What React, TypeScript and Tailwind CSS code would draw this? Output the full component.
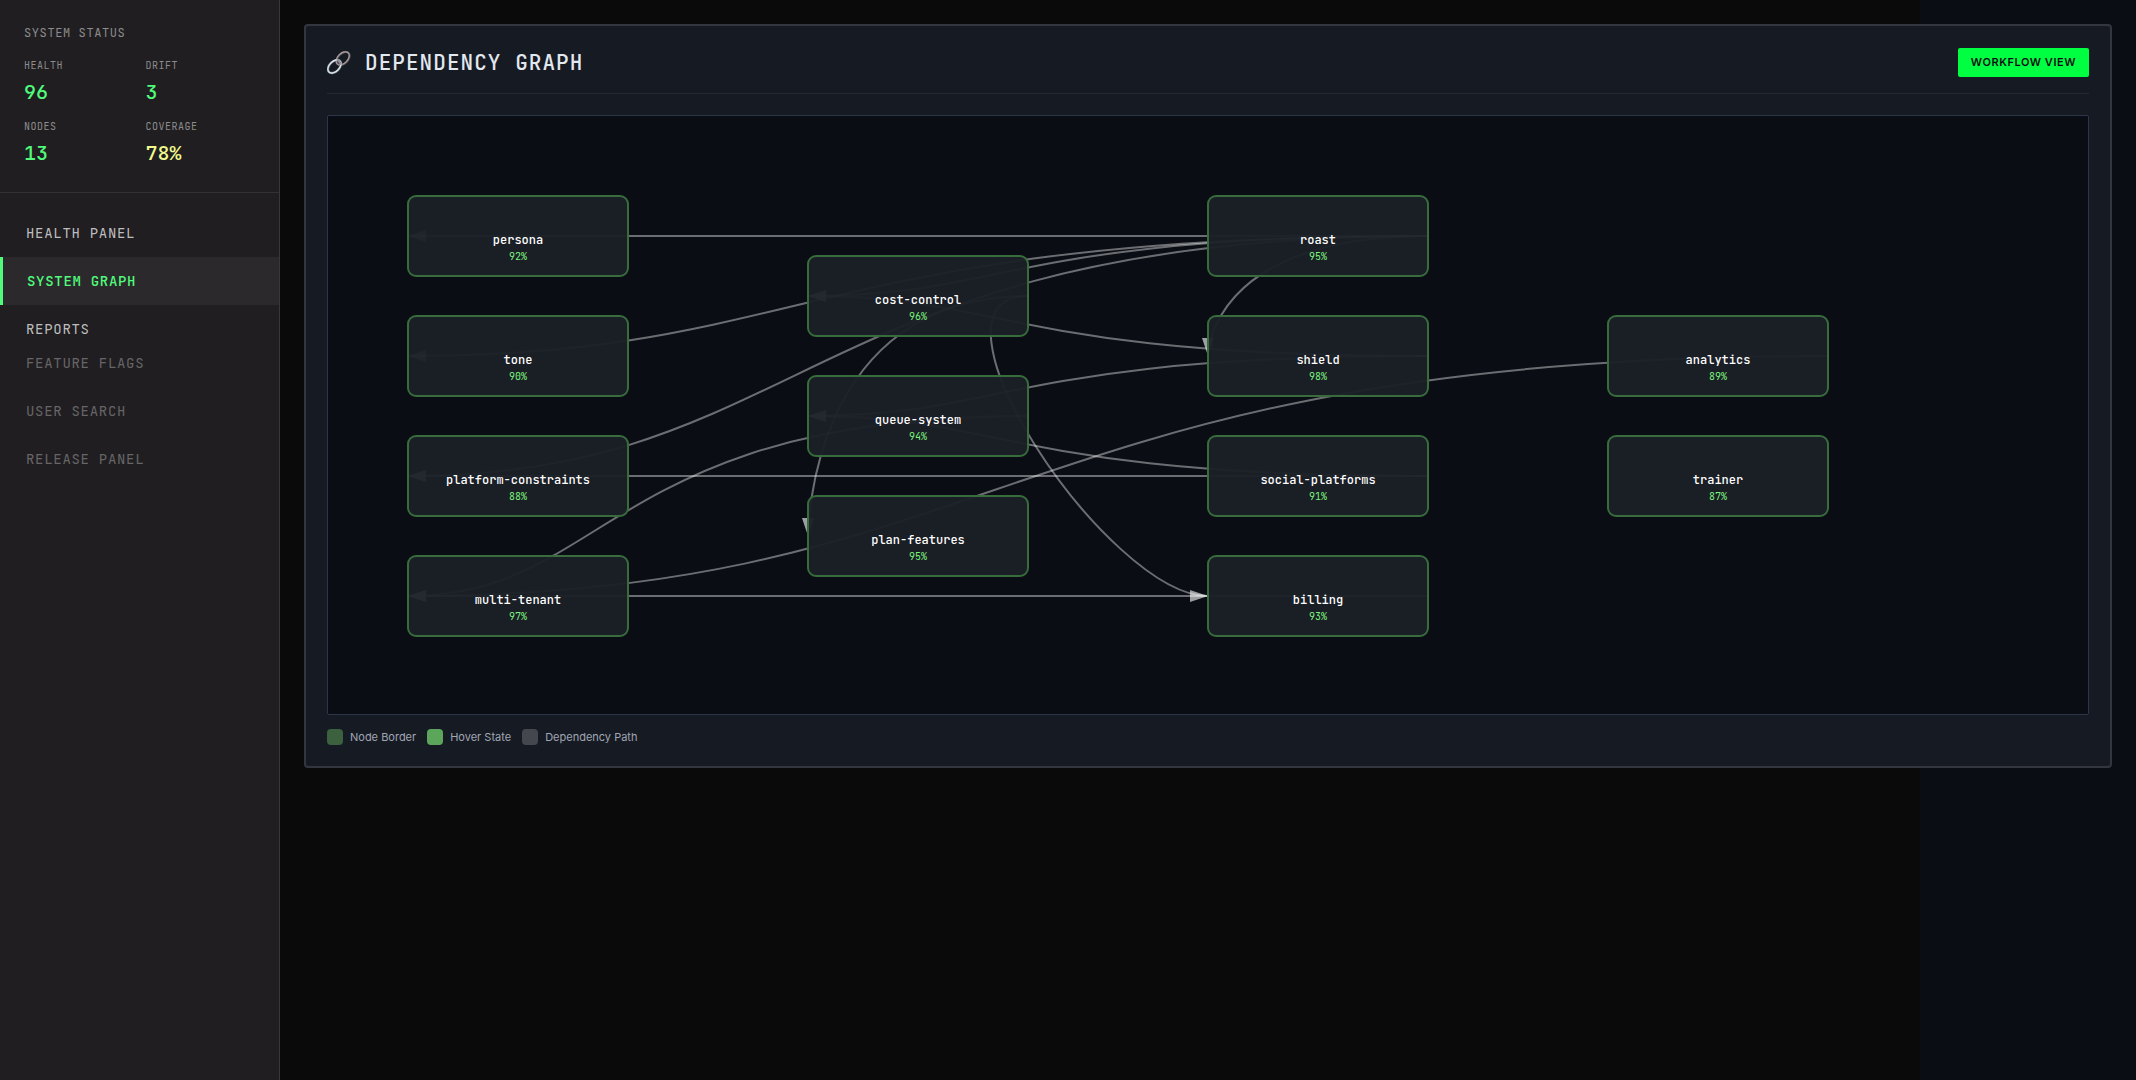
type NodeItem = { id: string; x: number; y: number; coverage: number };

const NODES: NodeItem[] = [
  { id: "persona", x: 80, y: 80, coverage: 92 },
  { id: "tone", x: 80, y: 200, coverage: 90 },
  { id: "platform-constraints", x: 80, y: 320, coverage: 88 },
  { id: "multi-tenant", x: 80, y: 440, coverage: 97 },
  { id: "cost-control", x: 480, y: 140, coverage: 96 },
  { id: "queue-system", x: 480, y: 260, coverage: 94 },
  { id: "plan-features", x: 480, y: 380, coverage: 95 },
  { id: "roast", x: 880, y: 80, coverage: 95 },
  { id: "shield", x: 880, y: 200, coverage: 98 },
  { id: "social-platforms", x: 880, y: 320, coverage: 91 },
  { id: "billing", x: 880, y: 440, coverage: 93 },
  { id: "analytics", x: 1280, y: 200, coverage: 89 },
  { id: "trainer", x: 1280, y: 320, coverage: 87 },
];

const EDGES: [string, string][] = [
  ["roast", "persona"],
  ["roast", "tone"],
  ["roast", "platform-constraints"],
  ["roast", "shield"],
  ["roast", "cost-control"],
  ["shield", "cost-control"],
  ["shield", "queue-system"],
  ["social-platforms", "queue-system"],
  ["social-platforms", "platform-constraints"],
  ["queue-system", "multi-tenant"],
  ["cost-control", "plan-features"],
  ["cost-control", "billing"],
  ["billing", "multi-tenant"],
  ["analytics", "multi-tenant"],
];

const NODE_WIDTH = 220;
const NODE_HEIGHT = 80;

function edgePath(fromId: string, toId: string) {
  const from = NODES.find((n) => n.id === fromId)!;
  const to = NODES.find((n) => n.id === toId)!;
  const dx = to.x - from.x;
  const bend = dx > 0 ? dx / 4 : dx / 2;
  const y1 = from.y + NODE_HEIGHT / 2;
  const y2 = to.y + NODE_HEIGHT / 2;
  return `M ${from.x + NODE_WIDTH} ${y1} C ${from.x + bend} ${y1}, ${to.x - bend} ${y2}, ${to.x} ${y2}`;
}

const STATS = [
  { label: "Health", value: "96", tone: "text-[#50fa7b]" },
  { label: "Drift", value: "3", tone: "text-[#50fa7b]" },
  { label: "Nodes", value: "13", tone: "text-[#50fa7b]" },
  { label: "Coverage", value: "78%", tone: "text-[#f1fa8c]" },
];

const LEGEND = [
  { label: "Node Border", swatch: "bg-[#3b613e]" },
  { label: "Hover State", swatch: "bg-[#5ca65c]" },
  { label: "Dependency Path", swatch: "bg-[#45474f]" },
];

function LinkIcon() {
  return (
    <svg width="24" height="24" viewBox="0 1 24 24" fill="none" aria-hidden="true">
      <g transform="rotate(-45 16 8.500)">
        <ellipse cx="16" cy="8.500" rx="7.800" ry="5" stroke="#5d5558" strokeWidth="2.200" />
        <ellipse cx="15.900" cy="8.200" rx="7.800" ry="5" stroke="#a79fa0" strokeWidth="1.200" />
      </g>
      <g transform="rotate(-45 7.500 16.500)">
        <ellipse cx="7.500" cy="16.500" rx="7.800" ry="5" stroke="#6d767c" strokeWidth="2.400" />
        <ellipse cx="7.500" cy="16.400" rx="7.800" ry="5" stroke="#dbe6ea" strokeWidth="1.400" />
      </g>
      <path d="M11 10 L13.500 13.500" stroke="#8d8a90" strokeWidth="2.200" strokeLinecap="round" />
    </svg>
  );
}

function Sidebar() {
  return (
    <aside className="w-[280px] shrink-0 border-r border-[#38383c] bg-[#201e21] font-['JetBrains_Mono','DejaVu_Sans_Mono',monospace]">
      <section className="border-b border-[#323135] px-6 pt-[25px] pb-[27px]">
        <h2 className="text-[12px] leading-4 tracking-wider text-[#8c8c8c]">SYSTEM STATUS</h2>
        <dl className="mt-4 grid grid-cols-2 gap-x-3 gap-y-[14px]">
          {STATS.map((s) => (
            <div key={s.label}>
              <dt className="text-[10px] leading-[18px] tracking-wider text-[#8c8c8c] uppercase">{s.label}</dt>
              <dd className={`mt-[5px] text-[20px] leading-6 font-medium ${s.tone}`}>{s.value}</dd>
            </div>
          ))}
        </dl>
      </section>
      <nav className="flex flex-col pt-4 text-[14px] leading-5 tracking-wider">
        <a href="#health" className="px-[26px] py-[14px] text-[#bdbdbe]">HEALTH PANEL</a>
        <a href="#graph" aria-current="page" className="border-l-3 border-[#50fa7b] bg-[#2b292c] px-6 py-[14px] font-medium text-[#50fa7b]">SYSTEM GRAPH</a>
        <a href="#reports" className="px-[26px] pt-[14px] text-[#bdbdbe]">REPORTS</a>
        <span className="px-[26px] py-[14px] text-[#666567]">FEATURE FLAGS</span>
        <span className="px-[26px] py-[14px] text-[#666567]">USER SEARCH</span>
        <span className="px-[26px] py-[14px] text-[#666567]">RELEASE PANEL</span>
      </nav>
    </aside>
  );
}

function Graph() {
  return (
    <div className="relative mt-[21px] h-[600px] overflow-hidden rounded-[2px] border border-[#2d3548] bg-[#0a0d14]">
      <svg className="absolute inset-0 h-full w-full" aria-hidden="true">
        <defs>
          <marker id="arrow" markerWidth="10" markerHeight="10" refX="9" refY="3" orient="auto" markerUnits="strokeWidth">
            <path d="M0,0 L0,6 L9,3 z" fill="#ffffff" fillOpacity="0.6" />
          </marker>
        </defs>
        {EDGES.map(([from, to]) => (
          <path key={`${from}-${to}`} d={edgePath(from, to)} fill="none" stroke="#ffffff" strokeOpacity="0.4" strokeWidth="2" markerEnd="url(#arrow)" />
        ))}
      </svg>
      {NODES.map((n) => (
        <div
          key={n.id}
          className="absolute flex h-[82px] w-[222px] flex-col items-center rounded-[9px] border-2 border-[#386c3c] bg-[#1b1f26]/96 pt-[35px] font-['JetBrains_Mono','DejaVu_Sans_Mono',monospace]"
          style={{ left: n.x - 1, top: n.y - 1 }}
        >
          <span className="text-[12px] leading-[17px] font-medium text-white">{n.id}</span>
          <span className="text-[10px] leading-4 text-[#7bf27d]">{n.coverage}%</span>
        </div>
      ))}
    </div>
  );
}

export default function App() {
  return (
    <div className="flex min-h-screen bg-[#0a0d14] bg-[linear-gradient(to_right,#0a0a0b_1920px,#0a0d14_1920px)]">
      <Sidebar />
      <main className="min-w-0 flex-1 p-6">
        <section className="rounded-[4px] border-2 border-[#33363f] bg-[#161a22] px-[21px] pt-[21px] pb-5">
          <header className="flex h-[47px] items-start justify-between border-b border-[#222834]">
            <h1 className="flex items-center gap-[14px] font-['JetBrains_Mono','DejaVu_Sans_Mono',monospace] text-[21px] leading-8 font-medium tracking-wider text-[#e2e8f0]">
              <LinkIcon />
              DEPENDENCY GRAPH
            </h1>
            <button className="mt-px h-[29px] rounded-[2px] bg-[#00ff41] px-[13px] pb-px font-['Inter',sans-serif] text-[11px] leading-4 font-semibold tracking-wider whitespace-nowrap text-[#0a0d14]">
              WORKFLOW VIEW
            </button>
          </header>
          <Graph />
          <ul className="mt-[13px] flex gap-[11px] font-['Inter',sans-serif] text-[11px] leading-[18px] text-[#a0a6b4]">
            {LEGEND.map((l) => (
              <li key={l.label} className="flex items-center gap-[7px]">
                <span className={`size-4 rounded-[4px] ${l.swatch}`} />
                {l.label}
              </li>
            ))}
          </ul>
        </section>
      </main>
    </div>
  );
}
